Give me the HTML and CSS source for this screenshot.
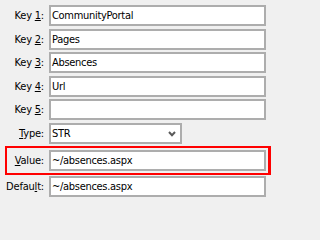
FILE: index.html
```html
<!DOCTYPE html>
<html>
<head>
<meta charset="utf-8">
<link rel="stylesheet" href="styles.css">
</head>
<body>
<div class="form">
  <div class="row"><label class="lbl">Key <u>1</u>:</label><div class="field">CommunityPortal</div></div>
  <div class="row"><label class="lbl">Key <u>2</u>:</label><div class="field">Pages</div></div>
  <div class="row"><label class="lbl">Key <u>3</u>:</label><div class="field">Absences</div></div>
  <div class="row"><label class="lbl">Key <u>4</u>:</label><div class="field">Url</div></div>
  <div class="row"><label class="lbl">Key <u>5</u>:</label><div class="field"></div></div>
  <div class="row row-select"><label class="lbl"><u>T</u>ype:</label><div class="field select"><span>STR</span><svg class="chev" width="8" height="6" viewBox="0 0 8 6"><path d="M1 1 L4 4.2 L7 1" fill="none" stroke="#5a5a5a" stroke-width="2"/></svg></div></div>
  <div class="row highlight"><label class="lbl"><u>V</u>alue:</label><div class="field">~/absences.aspx</div></div>
  <div class="row row-default"><label class="lbl">Defau<u>l</u>t:</label><div class="field">~/absences.aspx</div></div>
</div>
</body>
</html>
```
FILE: styles.css
```css
html, body {
  margin: 0;
  padding: 0;
  background: #f0f0f0;
}
body {
  width: 271px;
  height: 202px;
  overflow: hidden;
  font-family: "DejaVu Sans Condensed", "DejaVu Sans", sans-serif;
  font-stretch: condensed;
  font-size: 11px;
  color: #000;
}
.form {
  display: flex;
  flex-direction: column;
  gap: 2.5px;
  padding-top: 5px;
}
.row {
  display: flex;
  align-items: center;
  height: 21px;
}
.lbl {
  width: 44px;
  margin-right: 5px;
  text-align: right;
  white-space: nowrap;
  letter-spacing: -0.2px;
}
.lbl u {
  text-underline-offset: 1px;
}
.field {
  box-sizing: border-box;
  width: 217px;
  height: 21px;
  border: 2px solid #adadad;
  background: #fff;
  padding: 0 0 0 1px;
  line-height: 17px;
  white-space: nowrap;
  overflow: hidden;
  letter-spacing: -0.3px;
}
.select {
  width: 133px;
  display: flex;
  align-items: center;
  justify-content: space-between;
  padding-right: 4px;
}
.chev {
  display: block;
}
.row-select {
  margin-top: 0.5px;
}
.highlight {
  box-sizing: content-box;
  margin: -1px 0 0 5px;
  width: 260px;
  border: 2px solid #ff0000;
  border-right-width: 3px;
  padding: 2px 1px 2px 0;
}
.highlight .lbl {
  width: 37px;
}
.row-default {
  margin-top: -1.5px;
}
```
